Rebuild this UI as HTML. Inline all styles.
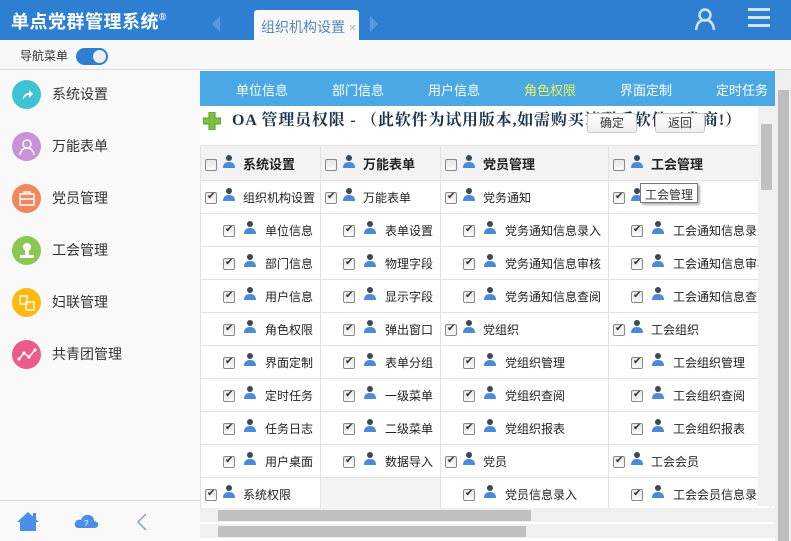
<!DOCTYPE html>
<html><head><meta charset="utf-8"><style>
*{margin:0;padding:0;box-sizing:border-box}
body{width:791px;height:541px;overflow:hidden;position:relative;font-family:"Liberation Sans","Noto Sans CJK SC",sans-serif;background:#f8f8f8;color:#333}
.hd{position:absolute;left:0;top:0;width:791px;height:40px;background:#2e7fd2}
.title{position:absolute;left:11px;top:8px;color:#fff;font-size:18px;font-weight:bold;letter-spacing:0.5px}
.title sup{font-size:10px;vertical-align:8px}
.tab{position:absolute;left:254px;top:10px;width:105px;height:30px;background:#f8f8f8;border-radius:3px 3px 0 0;font-size:14px;color:#5a87b5;padding:7px 0 0 7px}
.tab span{color:#bbb;font-size:13px}
.sub{position:absolute;left:0;top:40px;width:791px;height:30px;background:#f8f8f8;border-bottom:1px solid #ddd}
.sub .t{position:absolute;left:20px;top:7px;font-size:12px;color:#333}
.tg{position:absolute;left:76px;top:48px;width:32px;height:17px;border-radius:9px;background:#2e7fd2}
.tg i{position:absolute;right:2px;top:2px;width:13px;height:13px;border-radius:50%;background:#eee}
.side{position:absolute;left:0;top:71px;width:200px;height:470px;background:#f9f9f9}
.it{position:absolute;left:12px;height:28px;font-size:14px;color:#333}
.it .c{position:absolute;left:0;top:0;width:29px;height:29px;border-radius:50%}
.it .l{position:absolute;left:40px;top:4px;white-space:nowrap}
.bot{position:absolute;left:0;top:500px;width:200px;height:41px;border-top:1px solid #ddd}
.main{position:absolute;left:200px;top:71px;width:575px;height:470px;background:#fff;overflow:hidden}
.nav{position:absolute;left:0;top:0;width:575px;height:35px;background:#4aa8e5}
.nav span{position:absolute;top:9px;color:#fff;font-size:13px;white-space:nowrap}
.ttl{position:absolute;left:32px;top:36px;font-family:"Liberation Serif","Noto Serif CJK SC",serif;font-weight:bold;font-size:16px;color:#1e3550;white-space:nowrap;letter-spacing:0.8px}
.btn{position:absolute;top:42px;width:50px;height:20px;border:1px solid #c8c8c8;border-radius:3px;background:linear-gradient(#fff,#eee);font-size:12px;text-align:center;line-height:18px;color:#333}
table{position:absolute;left:0;top:74px;border-collapse:collapse;table-layout:fixed}
td{border:1px solid #e2e2e2;height:33px;font-size:12px;white-space:nowrap;overflow:hidden;color:#222;vertical-align:middle}
tr.h td{height:35px;background:#f3f3f3;font-weight:bold;font-size:13px}
td.p{padding-left:4px}
td.s{padding-left:22px}
td.s .cb{margin-right:9px}
td.s .pi{margin-right:9px}
td.e{background:#f3f3f3}
.cb{display:inline-block;width:12px;height:12px;border:1px solid #8a8a8a;border-radius:2px;background:linear-gradient(#e6e6e6,#fafafa);position:relative;vertical-align:middle;margin-right:6px}
.cb:after{content:"✔";position:absolute;left:1px;top:-2px;font-size:10px;color:#333}
.cb.u:after{content:""}
.pi{display:inline-block;vertical-align:middle;margin-right:8px;margin-top:-8px}
.vs{position:absolute;left:758px;top:106px;width:17px;height:400px;background:#f0f0f0}
.vs i{position:absolute;left:3px;top:18px;width:11px;height:66px;background:#c0c0c0}
.os{position:absolute;left:775px;top:70px;width:16px;height:471px;background:#efefef}
.os i{position:absolute;left:3px;top:20px;width:11px;height:451px;background:#bdbdbd}
.hs{position:absolute;left:200px;width:575px;height:14px;background:#f0f0f0}
.hs i{position:absolute;left:18px;top:2px;height:11px;background:#c0c0c0}
.tip{position:absolute;left:640px;top:183px;width:58px;height:20px;border:1px solid #777;background:#fff;font-size:12px;padding:2px 0 0 4px;box-shadow:2px 2px 2px rgba(0,0,0,.3);color:#333}
</style></head><body>
<div class="hd">
<div class="title">单点党群管理系统<sup>®</sup></div>
<svg style="position:absolute;left:212px;top:16px" width="8" height="16"><path d="M8 0 L0 8 L8 16Z" fill="#5b97d9"/></svg>
<div class="tab">组织机构设置 <span>×</span></div>
<svg style="position:absolute;left:370px;top:16px" width="8" height="16"><path d="M0 0 L8 8 L0 16Z" fill="#5b97d9"/></svg>
<svg style="position:absolute;left:694px;top:7px" width="22" height="24"><circle cx="11" cy="8" r="5.5" fill="none" stroke="#cfe6ff" stroke-width="2.4"/><path d="M2 23 Q3 13 11 13 Q19 13 20 23" fill="none" stroke="#cfe6ff" stroke-width="2.4"/></svg>
<svg style="position:absolute;left:748px;top:8px" width="24" height="20"><rect x="0" y="0" width="22" height="3" fill="#cfe6ff"/><rect x="0" y="8" width="22" height="3" fill="#cfe6ff"/><rect x="0" y="16" width="22" height="3" fill="#cfe6ff"/></svg>
</div>
<div class="sub"><div class="t">导航菜单</div></div>
<div class="tg"><i></i></div>
<div class="side">
<div class="it" style="top:9px"><div class="c" style="background:#3ec3d3"></div><svg style="position:absolute;left:8px;top:8px" width="14" height="14"><path d="M3 12 Q3 5 9 5 L9 2 L13 6 L9 10 L9 7 Q5 7 3 12Z" fill="#fff"/></svg><div class="l">系统设置</div></div>
<div class="it" style="top:61px"><div class="c" style="background:#c792d8"></div><svg style="position:absolute;left:7px;top:6px" width="16" height="18"><circle cx="8" cy="6" r="4" fill="none" stroke="#fff" stroke-width="1.5"/><path d="M1 17 Q2 10 8 10 Q14 10 15 17" fill="none" stroke="#fff" stroke-width="1.5"/></svg><div class="l">万能表单</div></div>
<div class="it" style="top:113px"><div class="c" style="background:#f5865c"></div><svg style="position:absolute;left:7px;top:7px" width="16" height="15"><rect x="1" y="3" width="14" height="11" fill="none" stroke="#fff" stroke-width="1.5"/><path d="M5 3 V1 H11 V3 M1 8 H15" fill="none" stroke="#fff" stroke-width="1.5"/></svg><div class="l">党员管理</div></div>
<div class="it" style="top:165px"><div class="c" style="background:#8bc753"></div><svg style="position:absolute;left:7px;top:6px" width="16" height="18"><circle cx="8" cy="5" r="4" fill="#fff"/><rect x="6" y="8" width="4" height="5" fill="#fff"/><rect x="1" y="13" width="14" height="3" fill="#fff"/></svg><div class="l">工会管理</div></div>
<div class="it" style="top:217px"><div class="c" style="background:#fbb911"></div><svg style="position:absolute;left:7px;top:7px" width="16" height="16"><rect x="1" y="1" width="7" height="8" fill="none" stroke="#fff" stroke-width="1.3"/><rect x="7" y="7" width="8" height="8" fill="none" stroke="#fff" stroke-width="1.3"/></svg><div class="l">妇联管理</div></div>
<div class="it" style="top:269px"><div class="c" style="background:#ec5b8c"></div><svg style="position:absolute;left:5px;top:8px" width="20" height="14"><path d="M2 11 L7 5 L12 9 L18 2" fill="none" stroke="#fff" stroke-width="1.5"/><circle cx="2" cy="11" r="1.6" fill="#fff"/><circle cx="7" cy="5" r="1.6" fill="#fff"/><circle cx="12" cy="9" r="1.6" fill="#fff"/><circle cx="18" cy="2" r="1.6" fill="#fff"/></svg><div class="l">共青团管理</div></div>
</div>
<div class="bot">
<svg style="position:absolute;left:16px;top:10px" width="24" height="20"><path d="M12 1 L23 11 H20 V20 H4 V11 H1Z" fill="#4a8fe6"/><rect x="17" y="2" width="3" height="6" fill="#4a8fe6"/></svg>
<svg style="position:absolute;left:74px;top:12px" width="25" height="16"><path d="M5 15 Q0 15 1 10 Q2 6 7 7 Q9 1 15 2 Q20 3 20 8 Q25 9 24 13 Q23 15 20 15Z" fill="#4a8fe6"/><text x="10" y="13" font-size="8" fill="#fff" font-family="Liberation Sans">?</text></svg>
<svg style="position:absolute;left:137px;top:12px" width="10" height="18"><path d="M9 1 L1 9 L9 17" fill="none" stroke="#7a9fd8" stroke-width="1.5"/></svg>
</div>
<div class="main">
<div class="nav"><span style="left:36px">单位信息</span><span style="left:132px">部门信息</span><span style="left:228px">用户信息</span><span style="left:324px;color:#e9f25a">角色权限</span><span style="left:420px">界面定制</span><span style="left:516px">定时任务</span></div>
<svg style="position:absolute;left:3px;top:41px" width="18" height="18"><path d="M6 0 H12 V6 H18 V12 H12 V18 H6 V12 H0 V6 H6Z" fill="#7cc142" stroke="#5a9a2a" stroke-width="1"/></svg>
<div class="ttl">OA 管理员权限 - （此软件为试用版本,如需购买请联系软件开发商!）</div>
<div class="btn" style="left:387px">确定</div>
<div class="btn" style="left:455px">返回</div>
<table>
<colgroup><col style="width:120px"><col style="width:120px"><col style="width:168px"><col style="width:150px"></colgroup>
<tr class="h"><td class="p"><span class="cb u"></span><svg class="pi" width="12" height="14"><circle cx="6" cy="4" r="3" fill="#3a4a5a"/><path d="M0 14 Q0 8 6 8 Q12 8 12 14Z" fill="#4a8ad8"/></svg>系统设置</td><td class="p"><span class="cb u"></span><svg class="pi" width="12" height="14"><circle cx="6" cy="4" r="3" fill="#3a4a5a"/><path d="M0 14 Q0 8 6 8 Q12 8 12 14Z" fill="#4a8ad8"/></svg>万能表单</td><td class="p"><span class="cb u"></span><svg class="pi" width="12" height="14"><circle cx="6" cy="4" r="3" fill="#3a4a5a"/><path d="M0 14 Q0 8 6 8 Q12 8 12 14Z" fill="#4a8ad8"/></svg>党员管理</td><td class="p"><span class="cb u"></span><svg class="pi" width="12" height="14"><circle cx="6" cy="4" r="3" fill="#3a4a5a"/><path d="M0 14 Q0 8 6 8 Q12 8 12 14Z" fill="#4a8ad8"/></svg>工会管理</td></tr>
<tr><td class="p"><span class="cb"></span><svg class="pi" width="12" height="14"><circle cx="6" cy="4" r="3" fill="#3a4a5a"/><path d="M0 14 Q0 8 6 8 Q12 8 12 14Z" fill="#4a8ad8"/></svg>组织机构设置</td><td class="p"><span class="cb"></span><svg class="pi" width="12" height="14"><circle cx="6" cy="4" r="3" fill="#3a4a5a"/><path d="M0 14 Q0 8 6 8 Q12 8 12 14Z" fill="#4a8ad8"/></svg>万能表单</td><td class="p"><span class="cb"></span><svg class="pi" width="12" height="14"><circle cx="6" cy="4" r="3" fill="#3a4a5a"/><path d="M0 14 Q0 8 6 8 Q12 8 12 14Z" fill="#4a8ad8"/></svg>党务通知</td><td class="p"><span class="cb"></span><svg class="pi" width="12" height="14"><circle cx="6" cy="4" r="3" fill="#3a4a5a"/><path d="M0 14 Q0 8 6 8 Q12 8 12 14Z" fill="#4a8ad8"/></svg>工会通知</td></tr>
<tr><td class="s"><span class="cb"></span><svg class="pi" width="12" height="14"><circle cx="6" cy="4" r="3" fill="#3a4a5a"/><path d="M0 14 Q0 8 6 8 Q12 8 12 14Z" fill="#4a8ad8"/></svg>单位信息</td><td class="s"><span class="cb"></span><svg class="pi" width="12" height="14"><circle cx="6" cy="4" r="3" fill="#3a4a5a"/><path d="M0 14 Q0 8 6 8 Q12 8 12 14Z" fill="#4a8ad8"/></svg>表单设置</td><td class="s"><span class="cb"></span><svg class="pi" width="12" height="14"><circle cx="6" cy="4" r="3" fill="#3a4a5a"/><path d="M0 14 Q0 8 6 8 Q12 8 12 14Z" fill="#4a8ad8"/></svg>党务通知信息录入</td><td class="s"><span class="cb"></span><svg class="pi" width="12" height="14"><circle cx="6" cy="4" r="3" fill="#3a4a5a"/><path d="M0 14 Q0 8 6 8 Q12 8 12 14Z" fill="#4a8ad8"/></svg>工会通知信息录入</td></tr>
<tr><td class="s"><span class="cb"></span><svg class="pi" width="12" height="14"><circle cx="6" cy="4" r="3" fill="#3a4a5a"/><path d="M0 14 Q0 8 6 8 Q12 8 12 14Z" fill="#4a8ad8"/></svg>部门信息</td><td class="s"><span class="cb"></span><svg class="pi" width="12" height="14"><circle cx="6" cy="4" r="3" fill="#3a4a5a"/><path d="M0 14 Q0 8 6 8 Q12 8 12 14Z" fill="#4a8ad8"/></svg>物理字段</td><td class="s"><span class="cb"></span><svg class="pi" width="12" height="14"><circle cx="6" cy="4" r="3" fill="#3a4a5a"/><path d="M0 14 Q0 8 6 8 Q12 8 12 14Z" fill="#4a8ad8"/></svg>党务通知信息审核</td><td class="s"><span class="cb"></span><svg class="pi" width="12" height="14"><circle cx="6" cy="4" r="3" fill="#3a4a5a"/><path d="M0 14 Q0 8 6 8 Q12 8 12 14Z" fill="#4a8ad8"/></svg>工会通知信息审核</td></tr>
<tr><td class="s"><span class="cb"></span><svg class="pi" width="12" height="14"><circle cx="6" cy="4" r="3" fill="#3a4a5a"/><path d="M0 14 Q0 8 6 8 Q12 8 12 14Z" fill="#4a8ad8"/></svg>用户信息</td><td class="s"><span class="cb"></span><svg class="pi" width="12" height="14"><circle cx="6" cy="4" r="3" fill="#3a4a5a"/><path d="M0 14 Q0 8 6 8 Q12 8 12 14Z" fill="#4a8ad8"/></svg>显示字段</td><td class="s"><span class="cb"></span><svg class="pi" width="12" height="14"><circle cx="6" cy="4" r="3" fill="#3a4a5a"/><path d="M0 14 Q0 8 6 8 Q12 8 12 14Z" fill="#4a8ad8"/></svg>党务通知信息查阅</td><td class="s"><span class="cb"></span><svg class="pi" width="12" height="14"><circle cx="6" cy="4" r="3" fill="#3a4a5a"/><path d="M0 14 Q0 8 6 8 Q12 8 12 14Z" fill="#4a8ad8"/></svg>工会通知信息查阅</td></tr>
<tr><td class="s"><span class="cb"></span><svg class="pi" width="12" height="14"><circle cx="6" cy="4" r="3" fill="#3a4a5a"/><path d="M0 14 Q0 8 6 8 Q12 8 12 14Z" fill="#4a8ad8"/></svg>角色权限</td><td class="s"><span class="cb"></span><svg class="pi" width="12" height="14"><circle cx="6" cy="4" r="3" fill="#3a4a5a"/><path d="M0 14 Q0 8 6 8 Q12 8 12 14Z" fill="#4a8ad8"/></svg>弹出窗口</td><td class="p"><span class="cb"></span><svg class="pi" width="12" height="14"><circle cx="6" cy="4" r="3" fill="#3a4a5a"/><path d="M0 14 Q0 8 6 8 Q12 8 12 14Z" fill="#4a8ad8"/></svg>党组织</td><td class="p"><span class="cb"></span><svg class="pi" width="12" height="14"><circle cx="6" cy="4" r="3" fill="#3a4a5a"/><path d="M0 14 Q0 8 6 8 Q12 8 12 14Z" fill="#4a8ad8"/></svg>工会组织</td></tr>
<tr><td class="s"><span class="cb"></span><svg class="pi" width="12" height="14"><circle cx="6" cy="4" r="3" fill="#3a4a5a"/><path d="M0 14 Q0 8 6 8 Q12 8 12 14Z" fill="#4a8ad8"/></svg>界面定制</td><td class="s"><span class="cb"></span><svg class="pi" width="12" height="14"><circle cx="6" cy="4" r="3" fill="#3a4a5a"/><path d="M0 14 Q0 8 6 8 Q12 8 12 14Z" fill="#4a8ad8"/></svg>表单分组</td><td class="s"><span class="cb"></span><svg class="pi" width="12" height="14"><circle cx="6" cy="4" r="3" fill="#3a4a5a"/><path d="M0 14 Q0 8 6 8 Q12 8 12 14Z" fill="#4a8ad8"/></svg>党组织管理</td><td class="s"><span class="cb"></span><svg class="pi" width="12" height="14"><circle cx="6" cy="4" r="3" fill="#3a4a5a"/><path d="M0 14 Q0 8 6 8 Q12 8 12 14Z" fill="#4a8ad8"/></svg>工会组织管理</td></tr>
<tr><td class="s"><span class="cb"></span><svg class="pi" width="12" height="14"><circle cx="6" cy="4" r="3" fill="#3a4a5a"/><path d="M0 14 Q0 8 6 8 Q12 8 12 14Z" fill="#4a8ad8"/></svg>定时任务</td><td class="s"><span class="cb"></span><svg class="pi" width="12" height="14"><circle cx="6" cy="4" r="3" fill="#3a4a5a"/><path d="M0 14 Q0 8 6 8 Q12 8 12 14Z" fill="#4a8ad8"/></svg>一级菜单</td><td class="s"><span class="cb"></span><svg class="pi" width="12" height="14"><circle cx="6" cy="4" r="3" fill="#3a4a5a"/><path d="M0 14 Q0 8 6 8 Q12 8 12 14Z" fill="#4a8ad8"/></svg>党组织查阅</td><td class="s"><span class="cb"></span><svg class="pi" width="12" height="14"><circle cx="6" cy="4" r="3" fill="#3a4a5a"/><path d="M0 14 Q0 8 6 8 Q12 8 12 14Z" fill="#4a8ad8"/></svg>工会组织查阅</td></tr>
<tr><td class="s"><span class="cb"></span><svg class="pi" width="12" height="14"><circle cx="6" cy="4" r="3" fill="#3a4a5a"/><path d="M0 14 Q0 8 6 8 Q12 8 12 14Z" fill="#4a8ad8"/></svg>任务日志</td><td class="s"><span class="cb"></span><svg class="pi" width="12" height="14"><circle cx="6" cy="4" r="3" fill="#3a4a5a"/><path d="M0 14 Q0 8 6 8 Q12 8 12 14Z" fill="#4a8ad8"/></svg>二级菜单</td><td class="s"><span class="cb"></span><svg class="pi" width="12" height="14"><circle cx="6" cy="4" r="3" fill="#3a4a5a"/><path d="M0 14 Q0 8 6 8 Q12 8 12 14Z" fill="#4a8ad8"/></svg>党组织报表</td><td class="s"><span class="cb"></span><svg class="pi" width="12" height="14"><circle cx="6" cy="4" r="3" fill="#3a4a5a"/><path d="M0 14 Q0 8 6 8 Q12 8 12 14Z" fill="#4a8ad8"/></svg>工会组织报表</td></tr>
<tr><td class="s"><span class="cb"></span><svg class="pi" width="12" height="14"><circle cx="6" cy="4" r="3" fill="#3a4a5a"/><path d="M0 14 Q0 8 6 8 Q12 8 12 14Z" fill="#4a8ad8"/></svg>用户桌面</td><td class="s"><span class="cb"></span><svg class="pi" width="12" height="14"><circle cx="6" cy="4" r="3" fill="#3a4a5a"/><path d="M0 14 Q0 8 6 8 Q12 8 12 14Z" fill="#4a8ad8"/></svg>数据导入</td><td class="p"><span class="cb"></span><svg class="pi" width="12" height="14"><circle cx="6" cy="4" r="3" fill="#3a4a5a"/><path d="M0 14 Q0 8 6 8 Q12 8 12 14Z" fill="#4a8ad8"/></svg>党员</td><td class="p"><span class="cb"></span><svg class="pi" width="12" height="14"><circle cx="6" cy="4" r="3" fill="#3a4a5a"/><path d="M0 14 Q0 8 6 8 Q12 8 12 14Z" fill="#4a8ad8"/></svg>工会会员</td></tr>
<tr><td class="p"><span class="cb"></span><svg class="pi" width="12" height="14"><circle cx="6" cy="4" r="3" fill="#3a4a5a"/><path d="M0 14 Q0 8 6 8 Q12 8 12 14Z" fill="#4a8ad8"/></svg>系统权限</td><td class="e"></td><td class="s"><span class="cb"></span><svg class="pi" width="12" height="14"><circle cx="6" cy="4" r="3" fill="#3a4a5a"/><path d="M0 14 Q0 8 6 8 Q12 8 12 14Z" fill="#4a8ad8"/></svg>党员信息录入</td><td class="s"><span class="cb"></span><svg class="pi" width="12" height="14"><circle cx="6" cy="4" r="3" fill="#3a4a5a"/><path d="M0 14 Q0 8 6 8 Q12 8 12 14Z" fill="#4a8ad8"/></svg>工会会员信息录入</td></tr>
</table>
</div>
<div class="vs"><i></i></div>
<div class="os"><i></i></div>
<div class="hs" style="top:508px"><i style="width:313px"></i></div>
<div class="hs" style="top:524px"><i style="width:308px"></i></div>
<div class="tip">工会管理</div>
</body></html>
